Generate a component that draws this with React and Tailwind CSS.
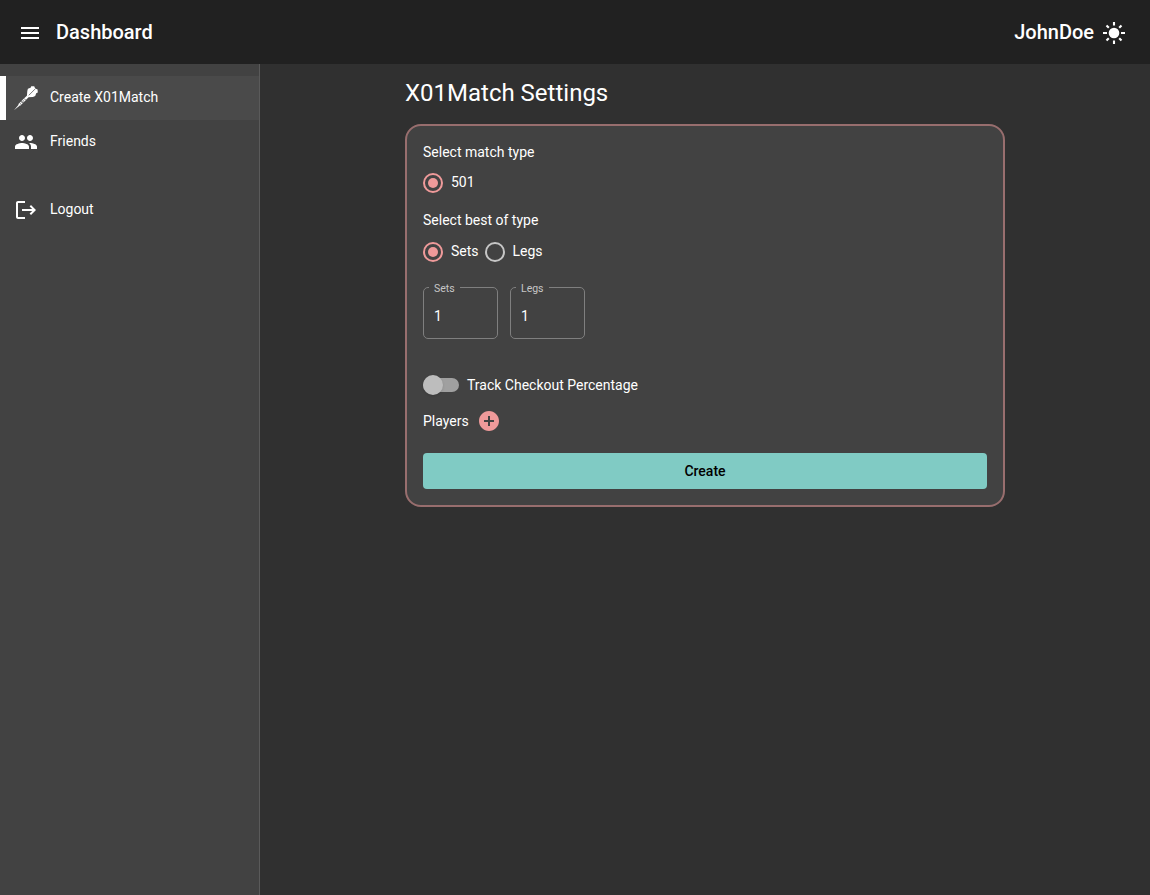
function Icon({ children, className = "" }) {
  return (
    <svg viewBox="0 0 24 24" fill="currentColor" className={"h-6 w-6 shrink-0 " + className}>
      {children}
    </svg>
  );
}

function DartIcon() {
  return (
    <Icon>
      <path d="M0 24.200 4.600 18.700 5.600 19.700Z" />
      <path d="M4.200 18.200 7.200 15.300 9 17.100 5.900 20Z" />
      <path d="M7.600 14.800 12.900 9.700 14.500 11.300 9.500 16.500Z" />
      <path d="M12.900 10.200 13.300 4.900 13.900 2.800 16.600 1.800 17.200.3 20.200.3 21.200 2.600 23.600 3.600 23.800 6.600 22.200 7.300 21.200 10 18.900 10.900 13.900 11.200Z" />
      <path
        d="M5.700 17 7.300 18.600M7 15.500 8.800 17.300M8.600 14 10.300 15.700M10.100 12.500 11.700 14.100M14.800 9.300 21 3.100"
        stroke="#4a4a4a"
        strokeWidth=".75"
      />
    </Icon>
  );
}

function NavItem({ icon, label, active }) {
  return (
    <a
      className={
        "flex h-11 items-center gap-3 border-l-[6px] pl-2 text-[14px] " +
        (active ? "border-white bg-[#4a4a4a]" : "border-transparent")
      }
    >
      {icon}
      <span className="-mt-px">{label}</span>
    </a>
  );
}

function Radio({ label, checked }) {
  return (
    <label className="flex h-5 items-center gap-2">
      <span
        className={
          "flex h-5 w-5 items-center justify-center rounded-full border-2 " +
          (checked ? "border-[#ef9a9a]" : "border-[#c6c6c6]")
        }
      >
        {checked && <span className="h-[10px] w-[10px] rounded-full bg-[#ef9a9a]" />}
      </span>
      <span className="pb-[2px] leading-5">{label}</span>
    </label>
  );
}

function NumberField({ label, value }) {
  return (
    <fieldset className="h-[57px] w-[75px] rounded-[5px] border border-[#7f7f7f] pl-[5px]">
      <legend className="h-[11px] px-[5px] text-[10.5px] leading-[13px] text-[#c6c6c6]">{label}</legend>
      <div className="pt-[15px] pl-[5px] leading-4">{value}</div>
    </fieldset>
  );
}

export default function App() {
  return (
    <div className="flex h-screen flex-col bg-[#303030] font-['Roboto',sans-serif] text-[14px] text-white">
      <header className="flex h-16 shrink-0 items-center bg-[#212121] pr-6 pl-[18px] text-[20px] font-medium">
        <Icon className="mt-[2px]">
          <path d="M3 18h18v-2H3v2zm0-5h18v-2H3v2zm0-7v2h18V6H3z" />
        </Icon>
        <h1 className="ml-[14px]">Dashboard</h1>
        <span className="ml-auto">JohnDoe</span>
        <Icon className="mt-[2px] ml-2">
          <circle cx="12" cy="12" r="5.3" />
          <path
            d="M12 1v3.500M12 19.500v3.500M1 12h4M19 12h4M4.500 4.500l2.300 2.300M17.200 17.200l2.300 2.300M4.500 19.500l2.300-2.300M17.200 6.800l2.300-2.300"
            stroke="currentColor"
            strokeWidth="2.1"
          />
        </Icon>
      </header>
      <div className="flex min-h-0 flex-1">
        <nav className="w-[260px] shrink-0 border-r border-[#5a5a5a] bg-[#424242] pt-3">
          <NavItem active label="Create X01Match" icon={<DartIcon />} />
          <NavItem
            label="Friends"
            icon={
              <Icon>
                <path d="M16 11c1.66 0 2.99-1.34 2.99-3S17.66 5 16 5c-1.66 0-3 1.34-3 3s1.34 3 3 3zm-8 0c1.66 0 2.99-1.34 2.99-3S9.66 5 8 5C6.34 5 5 6.34 5 8s1.34 3 3 3zm0 2c-2.33 0-7 1.17-7 3.5V19h14v-2.5c0-2.33-4.67-3.5-7-3.5zm8 0c-.29 0-.62.02-.97.05 1.16.84 1.97 1.97 1.97 3.45V19h6v-2.5c0-2.33-4.67-3.5-7-3.5z" />
              </Icon>
            }
          />
          <div className="h-6" />
          <NavItem
            label="Logout"
            icon={
              <Icon>
                <path d="M4 3h7v2H4v14h7v2H4c-1.1 0-2-.9-2-2V5c0-1.1.9-2 2-2zM17 7l5 5-5 5-1.4-1.4 2.6-2.6H8v-2h10.200l-2.6-2.6z" />
              </Icon>
            }
          />
        </nav>
        <main className="flex flex-1 justify-center">
          <div className="w-[600px] pt-[13px]">
            <h2 className="text-[24px] leading-8">X01Match Settings</h2>
            <form className="mt-[15px] flex h-[383px] flex-col rounded-[16px] border-2 border-[#986e6e] bg-[#424242] px-4 pt-4">
              <p className="leading-5">Select match type</p>
              <div className="mt-[11px] flex">
                <Radio checked label="501" />
              </div>
              <p className="mt-[17px] leading-5">Select best of type</p>
              <div className="mt-3 flex gap-[6px]">
                <Radio checked label="Sets" />
                <Radio label="Legs" />
              </div>
              <div className="mt-5 flex gap-3">
                <NumberField label="Sets" value="1" />
                <NumberField label="Legs" value="1" />
              </div>
              <div className="mt-9 flex h-5 items-center gap-2">
                <span className="flex h-[14px] w-9 items-center rounded-full bg-[#a0a0a0]">
                  <span className="h-5 w-5 rounded-full bg-[#bdbdbd] shadow" />
                </span>
                <span>Track Checkout Percentage</span>
              </div>
              <div className="mt-[14px] flex h-6 items-center gap-2">
                <span>Players</span>
                <Icon className="text-[#ef9a9a]">
                  <path d="M12 2C6.480 2 2 6.480 2 12s4.480 10 10 10 10-4.480 10-10S17.520 2 12 2zm5 11h-4v4h-2v-4H7v-2h4V7h2v4h4v2z" />
                </Icon>
              </div>
              <button className="mt-5 h-9 rounded-[4px] bg-[#80cbc4] font-medium text-black">Create</button>
            </form>
          </div>
        </main>
      </div>
    </div>
  );
}
